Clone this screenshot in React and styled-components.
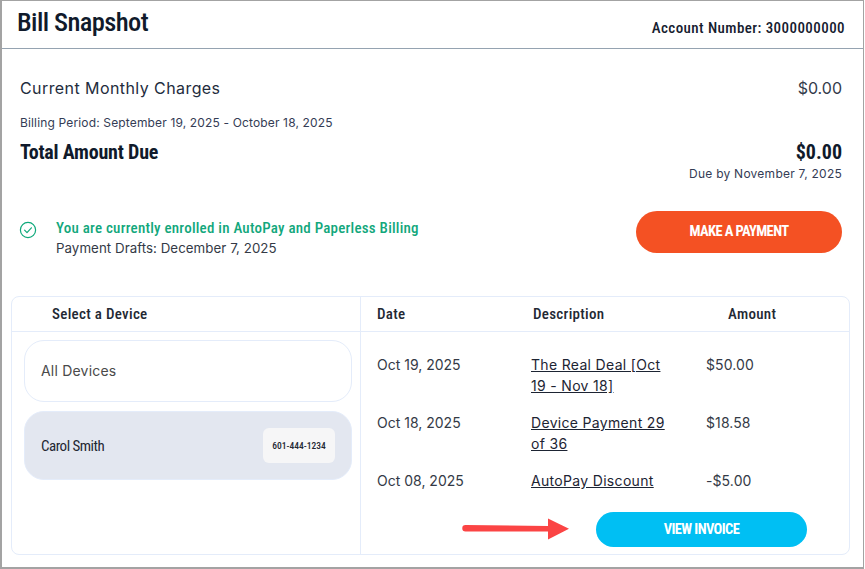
import React from "react";
import styled, { createGlobalStyle } from "styled-components";

const GlobalStyle = createGlobalStyle`
  html, body {
    margin: 0;
    padding: 0;
    background: #fff;
  }
  * {
    box-sizing: border-box;
  }
`;

const bodyFont = `"Inter", "Open Sans", sans-serif`;
const headFont = `"Roboto", "Open Sans", sans-serif`;

const Frame = styled.div`
  width: 864px;
  height: 569px;
  border: 1px solid #a3a3a3;
  border-left-width: 2px;
  border-bottom-width: 2px;
  font-family: ${bodyFont};
  color: #1d2433;
  overflow: hidden;
`;

const Header = styled.header`
  height: 48px;
  display: flex;
  justify-content: space-between;
  align-items: flex-end;
  padding: 0 18px 11px 15px;
  border-bottom: 1px solid #95a3b1;
`;

const Title = styled.h1`
  margin: 0 0 -3px;
  font: 500 26.5px/36px ${headFont};
  font-stretch: 75%;
  letter-spacing: -0.6px;
  color: #101a2b;
`;

const AccountNumber = styled.div`
  font: 500 15px/18px ${headFont};
  font-stretch: 75%;
  letter-spacing: 0.43px;
  color: #16202f;
`;

const Summary = styled.section`
  padding: 29px 21px 0 18px;
`;

const Row = styled.div`
  display: flex;
  justify-content: space-between;
  align-items: center;
`;

const ChargeLabel = styled.span`
  font-size: 16px;
  line-height: 20px;
  color: #232c3d;
  letter-spacing: 0.42px;
`;

const ChargeValue = styled.span`
  font-size: 16px;
  line-height: 20px;
  color: #343c4b;
`;

const Period = styled.div`
  margin-top: 17px;
  font-size: 12px;
  line-height: 16px;
  letter-spacing: 0.15px;
  color: #343c55;
`;

const TotalRow = styled(Row)`
  margin-top: 9px;
  font: 700 20px/24px ${headFont};
  font-stretch: 75%;
  color: #101a2b;

  span:first-child {
    letter-spacing: -0.2px;
  }
`;

const DueBy = styled.div`
  margin-top: 2px;
  text-align: right;
  font-size: 12px;
  line-height: 16px;
  letter-spacing: 0.25px;
  color: #343c55;
`;

const AutoPayRow = styled.section`
  display: flex;
  align-items: flex-start;
  margin-top: 29px;
  padding: 0 21px 0 17px;
`;

const CheckIcon = styled.svg`
  width: 18px;
  height: 18px;
  flex: none;
  margin: 10px 19px 0 0;
  color: #0fa97b;
`;

const AutoPayText = styled.div`
  flex: 1;
  padding-top: 7px;
`;

const AutoPayTitle = styled.div`
  font: 500 15px/20px ${headFont};
  font-stretch: 75%;
  letter-spacing: 0.23px;
  color: #12a77c;
`;

const AutoPayDrafts = styled.div`
  font-size: 13.3px;
  line-height: 20px;
  letter-spacing: 0.05px;
  color: #343a46;
`;

const PillButton = styled.button`
  border: 0;
  border-radius: 999px;
  color: #fff;
  text-transform: uppercase;
  font: 700 14.5px/18px ${headFont};
  font-stretch: 75%;
  letter-spacing: -0.6px;
  background: ${(p) => p.$color};
  width: ${(p) => p.$width}px;
  height: ${(p) => p.$height}px;
  padding: 0;
`;

const DeviceCard = styled.section`
  margin: 38px 13px 0 9px;
  height: 259px;
  border: 1px solid #e4ecfa;
  border-radius: 8px;
  display: grid;
  grid-template-columns: 349px 1fr;
  grid-template-rows: 35px 1fr;
`;

const HeadCell = styled.div`
  font: 500 15px/18px ${headFont};
  font-stretch: 75%;
  letter-spacing: 0.3px;
  color: #232833;
  display: flex;
  align-items: center;
  border-bottom: 1px solid #e4ecfa;
`;

const DeviceHead = styled(HeadCell)`
  padding-left: 40px;
  border-right: 1px solid #e4ecfa;
`;

const TableHead = styled(HeadCell)`
  display: grid;
  grid-template-columns: 156px 195px 1fr;
  padding-left: 16px;
`;

const DeviceList = styled.div`
  padding: 8px 8px 0 12px;
  border-right: 1px solid #e4ecfa;
  display: flex;
  flex-direction: column;
  gap: 9px;
`;

const DeviceItem = styled.div`
  height: ${(p) => (p.$active ? 69 : 62)}px;
  display: flex;
  align-items: center;
  justify-content: space-between;
  padding: 0 16px;
  border: 1px solid #e4ecfa;
  border-radius: 20px;
  background: ${(p) => (p.$active ? "#e3e7f0" : "#fff")};
`;

const AllDevices = styled.span`
  font-size: 14px;
  letter-spacing: 0.2px;
  padding-bottom: 2px;
  color: #4a4a4a;
`;

const DeviceName = styled.span`
  font: 400 15px/18px ${headFont};
  font-stretch: 75%;
  letter-spacing: -0.5px;
  color: #232833;
`;

const PhoneChip = styled.span`
  width: 72px;
  height: 35px;
  display: flex;
  align-items: center;
  justify-content: center;
  border-radius: 6px;
  background: #f6f6f7;
  font: 500 9.5px/12px ${headFont};
  font-stretch: 75%;
  color: #232833;
`;

const TablePanel = styled.div`
  display: flex;
  flex-direction: column;
  padding: 22px 0 0 16px;
`;

const LineItem = styled.div`
  display: grid;
  grid-template-columns: 154px 140px 1fr;
  margin-bottom: 16px;
  font-size: 14px;
  line-height: 21px;
  color: #343a46;
`;

const DescLink = styled.a`
  color: #1d2433;
  text-decoration: underline;
  letter-spacing: 0.32px;
`;

const Amount = styled.span`
  margin-left: 35px;
  letter-spacing: 0.1px;
`;

const Footer = styled.div`
  display: flex;
  align-items: center;
  justify-content: flex-end;
  gap: 27px;
  margin-top: 5px;
  padding-right: 42px;
`;

const Arrow = styled.svg`
  width: 107px;
  height: 22px;
  flex: none;
  margin-bottom: 2px;
`;

const items = [
  { date: "Oct 19, 2025", desc: "The Real Deal [Oct 19 - Nov 18]", amount: "$50.00" },
  { date: "Oct 18, 2025", desc: "Device Payment 29 of 36", amount: "$18.58" },
  { date: "Oct 08, 2025", desc: "AutoPay Discount", amount: "-$5.00" },
];

const App = () => {
  return (
    <Frame>
      <GlobalStyle />
      <Header>
        <Title>Bill Snapshot</Title>
        <AccountNumber>Account Number: 3000000000</AccountNumber>
      </Header>

      <Summary>
        <Row>
          <ChargeLabel>Current Monthly Charges</ChargeLabel>
          <ChargeValue>$0.00</ChargeValue>
        </Row>
        <Period>Billing Period: September 19, 2025 - October 18, 2025</Period>
        <TotalRow>
          <span>Total Amount Due</span>
          <span>$0.00</span>
        </TotalRow>
        <DueBy>Due by November 7, 2025</DueBy>
      </Summary>

      <AutoPayRow>
        <CheckIcon viewBox="0 0 18 18" fill="none" stroke="currentColor" strokeWidth="1.2">
          <circle cx="9" cy="9" r="7.6" />
          <path d="M5.6 9.2l2.4 2.4 4.4-4.8" strokeLinecap="round" strokeLinejoin="round" />
        </CheckIcon>
        <AutoPayText>
          <AutoPayTitle>You are currently enrolled in AutoPay and Paperless Billing</AutoPayTitle>
          <AutoPayDrafts>Payment Drafts: December 7, 2025</AutoPayDrafts>
        </AutoPayText>
        <PillButton $color="#f45123" $width={206} $height={42}>Make a Payment</PillButton>
      </AutoPayRow>

      <DeviceCard>
        <DeviceHead>Select a Device</DeviceHead>
        <TableHead>
          <span>Date</span>
          <span>Description</span>
          <span>Amount</span>
        </TableHead>

        <DeviceList>
          <DeviceItem>
            <AllDevices>All Devices</AllDevices>
          </DeviceItem>
          <DeviceItem $active>
            <DeviceName>Carol Smith</DeviceName>
            <PhoneChip>601-444-1234</PhoneChip>
          </DeviceItem>
        </DeviceList>

        <TablePanel>
          {items.map((item) => (
            <LineItem key={item.date}>
              <span>{item.date}</span>
              <span>
                <DescLink href="#">{item.desc}</DescLink>
              </span>
              <Amount>{item.amount}</Amount>
            </LineItem>
          ))}
          <Footer>
            <Arrow viewBox="0 0 107 22">
              <path d="M3.5 7L86 8V.5L107 10.8 86 21.5V13.5L3.5 13.5a3.2 3.2 0 0 1 0-6.5z" fill="#fb4444" />
            </Arrow>
            <PillButton $color="#00bff3" $width={211} $height={35}>View Invoice</PillButton>
          </Footer>
        </TablePanel>
      </DeviceCard>
    </Frame>
  );
};

export default App;
